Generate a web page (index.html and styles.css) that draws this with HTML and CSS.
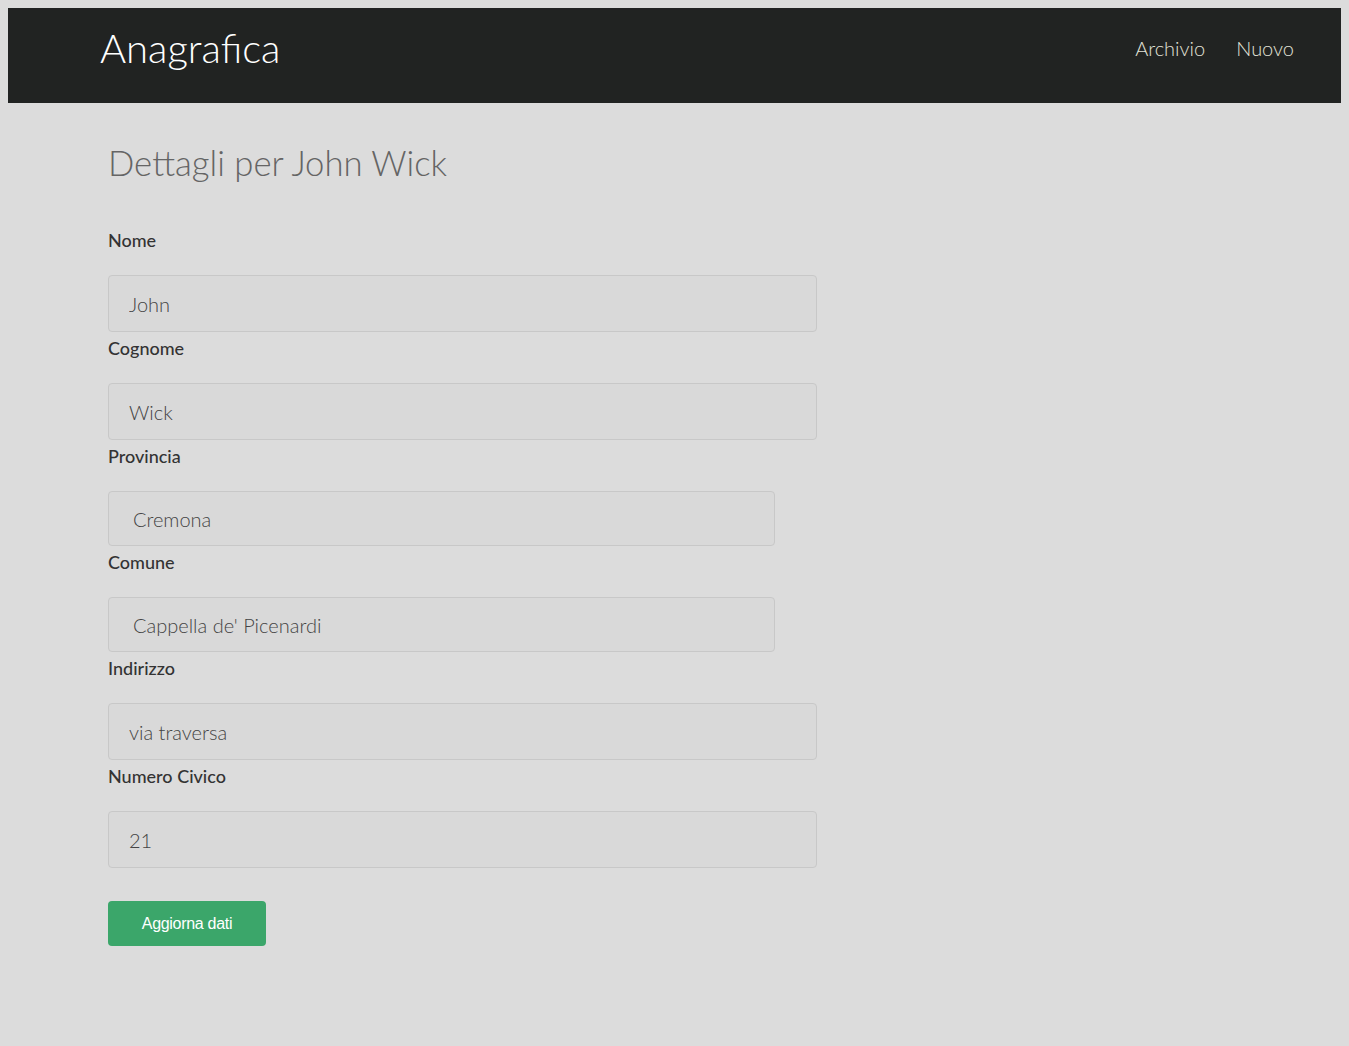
FILE: index.html
```html
<!DOCTYPE html>
<html lang="it">
<head>
<meta charset="utf-8">
<title>Anagrafica</title>
<link rel="stylesheet" href="styles.css">
</head>
<body>
<nav class="navbar">
  <a class="brand" href="#">Anagrafica</a>
  <div class="nav-links">
    <a class="nav-link" href="#">Archivio</a>
    <a class="nav-link" href="#">Nuovo</a>
  </div>
</nav>
<main class="container">
  <h1 class="title">Dettagli per John Wick</h1>
  <form class="form">
    <div class="group">
      <label class="label">Nome</label>
      <input class="field" type="text" value="John">
    </div>
    <div class="group">
      <label class="label">Cognome</label>
      <input class="field" type="text" value="Wick">
    </div>
    <div class="group">
      <label class="label">Provincia</label>
      <select class="field select"><option>Cremona</option></select>
    </div>
    <div class="group">
      <label class="label">Comune</label>
      <select class="field select"><option>Cappella de' Picenardi</option></select>
    </div>
    <div class="group">
      <label class="label">Indirizzo</label>
      <input class="field" type="text" value="via traversa">
    </div>
    <div class="group">
      <label class="label">Numero Civico</label>
      <input class="field" type="text" value="21">
    </div>
    <button class="btn" type="button">Aggiorna dati</button>
  </form>
</main>
</body>
</html>
```
FILE: styles.css
```css
html {
  background: #dcdcdc;
}
body {
  margin: 8px;
  background: #dcdcdc;
  font-family: Lato, "Open Sans", sans-serif;
}
.navbar {
  height: 95px;
  background: #212322;
  display: flex;
  justify-content: space-between;
  align-items: flex-start;
  padding: 0 47px 0 92px;
}
.brand {
  margin-top: 20px;
  font-size: 40px;
  line-height: 40px;
  font-weight: 300;
  color: #ffffff;
  text-decoration: none;
}
.nav-links {
  display: flex;
  gap: 31px;
  margin-top: 30px;
}
.nav-link {
  font-size: 20px;
  line-height: 20px;
  font-weight: 300;
  color: #e2e2d8;
  text-decoration: none;
}
.container {
  padding-left: 100px;
}
.title {
  margin: 40px 0 41px;
  font-size: 34.7px;
  line-height: 40px;
  font-weight: 300;
  color: #656565;
}
.form {
  display: flex;
  flex-direction: column;
  align-items: flex-start;
}
.group {
  display: flex;
  flex-direction: column;
  align-items: flex-start;
}
.label {
  padding-top: 4px;
  margin-bottom: 23px;
  font-size: 18px;
  line-height: 24px;
  font-weight: 500;
  color: #333333;
}
.field {
  box-sizing: border-box;
  width: 709px;
  height: 57px;
  margin: 0;
  padding: 0 20px;
  border: 1px solid #c8c8c8;
  border-radius: 4px;
  background: #d9d9d9;
  font-family: Lato, sans-serif;
  font-size: 20px;
  font-weight: 300;
  color: #444444;
  outline: none;
}
.select {
  -webkit-appearance: none;
  appearance: none;
  width: 667px;
  height: 55px;
  padding-left: 24px;
}
.btn {
  margin-top: 33px;
  width: 158px;
  height: 45px;
  border: none;
  border-radius: 4px;
  background: #3ba66a;
  color: #ffffff;
  font-family: "Liberation Sans", Arial, sans-serif;
  font-size: 16px;
  letter-spacing: -0.3px;
}
```
